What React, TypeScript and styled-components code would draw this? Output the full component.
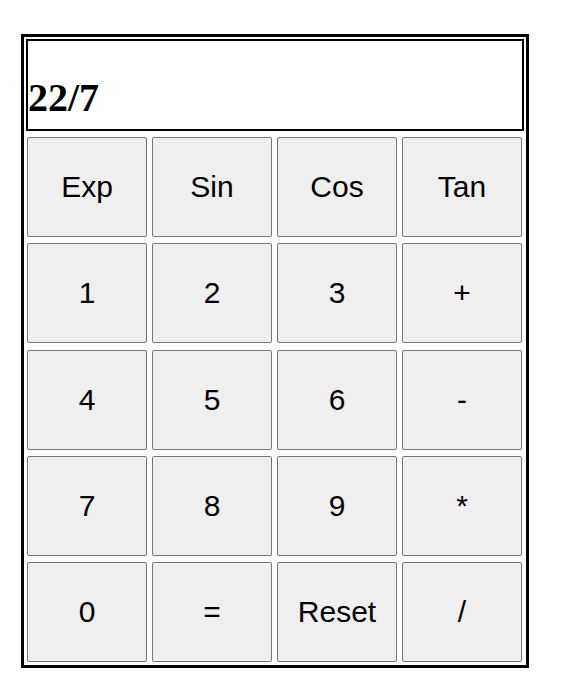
import React from "react";
import styled, { createGlobalStyle } from "styled-components";

const Global = createGlobalStyle`
  html, body { margin: 0; padding: 0; background: #ffffff; }
  body { font-family: "Liberation Serif", "Times New Roman", serif; }
`;

const Page = styled.div`
  padding: 34px 0 0 21px;
`;

const Calculator = styled.div`
  box-sizing: border-box;
  width: 508px;
  border: 3px solid #000;
  padding: 2px 2px 3px 2px;
  display: flex;
  flex-direction: column;
  gap: 6px;
`;

const Display = styled.div`
  box-sizing: border-box;
  width: 498px;
  height: 92px;
  border: 2px solid #000;
  display: flex;
  align-items: flex-end;
  padding: 0 0 8px 0;
  font-family: "Liberation Serif", "Times New Roman", serif;
  font-weight: bold;
  font-size: 40px;
  color: #000;
`;

const Keys = styled.div`
  display: grid;
  grid-template-columns: repeat(4, 120px);
  grid-auto-rows: 100px;
  column-gap: 5px;
  row-gap: 6.25px;
  margin-left: 1px;
`;

const Key = styled.button`
  box-sizing: border-box;
  width: 120px;
  height: 100px;
  margin: 0;
  padding: 0;
  background: #efefef;
  border: 1px solid #767676;
  border-radius: 2px;
  font-family: "Liberation Sans", Arial, sans-serif;
  font-size: 30px;
  color: #000;
  display: flex;
  align-items: center;
  justify-content: center;
`;

const keys = [
  "Exp", "Sin", "Cos", "Tan",
  "1", "2", "3", "+",
  "4", "5", "6", "-",
  "7", "8", "9", "*",
  "0", "=", "Reset", "/",
];

export default function App() {
  return (
    <>
      <Global />
      <Page>
        <Calculator>
          <Display>22/7</Display>
          <Keys>
            {keys.map((k) => (
              <Key key={k}>{k}</Key>
            ))}
          </Keys>
        </Calculator>
      </Page>
    </>
  );
}
